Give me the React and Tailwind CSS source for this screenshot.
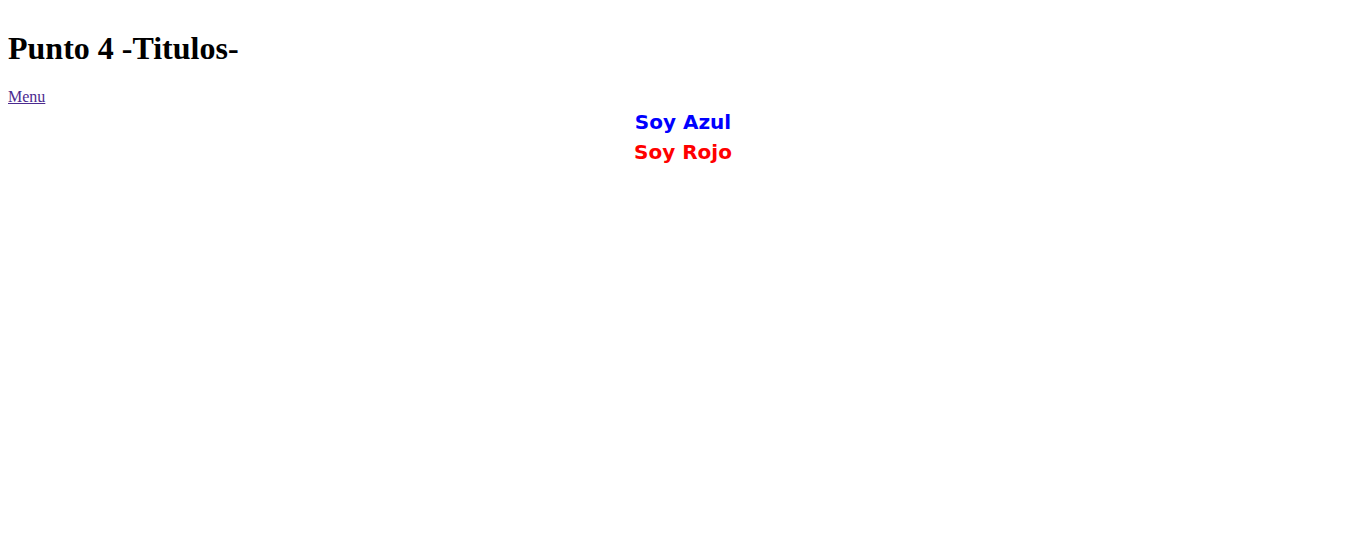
export default function App() {
  return (
    <div className="min-h-[560px] bg-white p-2 font-['Liberation_Serif',serif] text-black">
      <h1 className="mt-[22.44px] mb-[17.44px] text-[32px] font-bold leading-[37px]">Punto 4 -Titulos-</h1>
      <a href="#" className="text-base leading-[18px] text-[#4b2a8f] underline">Menu</a>
      <div className="-mt-[2px] text-center font-['Comic_Sans_MS','DejaVu_Sans',sans-serif] text-[20px] font-bold leading-[30px]">
        <div className="text-[#0000ff]">Soy Azul</div>
        <div className="text-[#ff0000]">Soy Rojo</div>
      </div>
    </div>
  )
}
